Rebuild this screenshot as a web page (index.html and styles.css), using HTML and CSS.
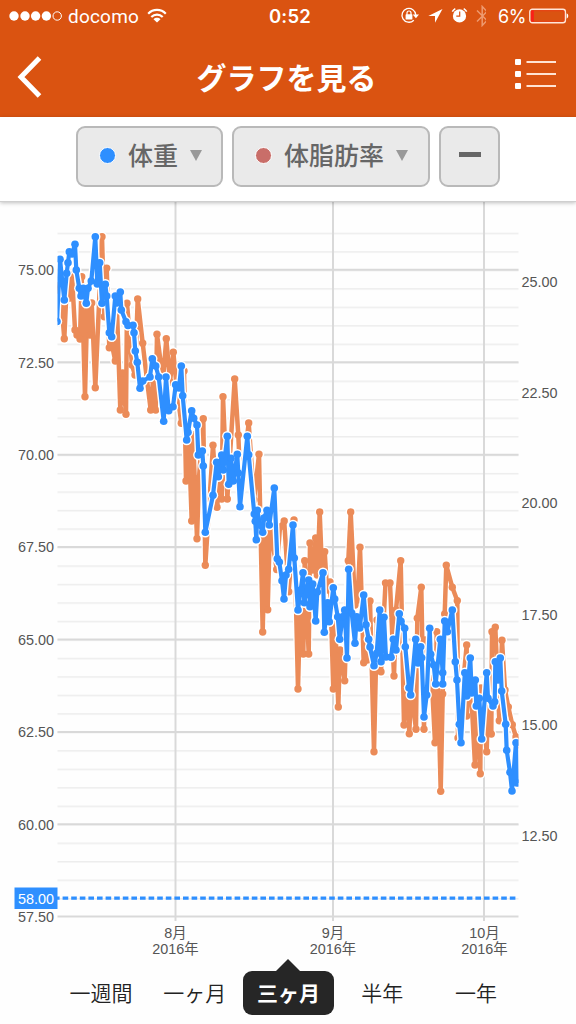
FILE: index.html
```html
<!DOCTYPE html>
<html lang="ja">
<head>
    <meta charset="utf-8">
    <meta name="viewport" content="width=device-width, initial-scale=1">
    <title>グラフを見る</title>
    <link rel="stylesheet" href="styles.css">
</head>
<body>
<header>
    <div class="status">
        <div class="carrier">
            <svg width="54" height="12" viewBox="0 0 54 12">
                <g fill="#fff"><circle cx="6" cy="6" r="4.7"/><circle cx="17" cy="6" r="4.7"/><circle cx="27.6" cy="6" r="4.7"/><circle cx="38.4" cy="6" r="4.7"/></g>
                <circle cx="49.2" cy="6" r="4.2" fill="none" stroke="#fff"/>
            </svg>
            <span class="name">docomo</span>
            <svg class="wifi" width="20" height="16" viewBox="0 0 20 16">
                <g fill="none" stroke="#fff" stroke-width="2.2"><path d="M1.2 5.7C6 .7 14 .7 18.8 5.7"/><path d="M4.3 9C7.5 5.8 12.5 5.8 15.7 9"/></g>
                <path d="M6.5 11.2C8.5 9.3 11.5 9.3 13.5 11.2L10 14.6z" fill="#fff"/>
            </svg>
        </div>
        <div class="clock">0:52</div>
        <div class="indicators">
            <svg width="86" height="22" viewBox="400 5 86 22">
                <!-- rotation lock -->
                <path d="M413.800 20.200A6.900 6.900 0 1 1 415.800 15" fill="none" stroke="#fff" stroke-width="1.300"/>
                <path d="M412.700 14.500h6.300l-3.100 3.800z" fill="#fff"/>
                <rect x="405.600" y="14.300" width="6.800" height="5.200" rx=".6" fill="#fff"/>
                <path d="M407 15v-2a2 2 0 0 1 4 0v2" fill="none" stroke="#fff" stroke-width="1.200"/>
                <!-- location -->
                <path d="M442.500 9L428.300 16h6.700v6.700z" fill="#fff"/>
                <!-- alarm -->
                <circle cx="459.500" cy="15.900" r="6.600" fill="#fff"/>
                <path d="M452.300 11.700a8 8 0 0 1 3-3M463.700 8.700a8 8 0 0 1 3 3" stroke="#fff" stroke-width="1.500" fill="none"/>
                <path d="M459.700 11.500v4.700h-3.400" fill="none" stroke="#da5311" stroke-width="1.200"/>
                <!-- bluetooth -->
                <path d="M477 10.500l10 10-4.800 5V6.500l4.800 5-10 10" fill="none" stroke="#ee9a70" stroke-width="1.500"/>
            </svg>
            <span class="percent">6%</span>
            <svg class="battery" width="40" height="16" viewBox="0 0 40 16">
                <rect x=".8" y="1.300" width="35.600" height="13.400" rx="2.500" fill="none" stroke="#ffe5d8" stroke-width="1.400"/>
                <rect x="2.300" y="2.800" width="32.600" height="10.400" rx="1" fill="none" stroke="#ef3a1a" stroke-width=".7"/>
                <rect x="2" y="2.500" width="2.800" height="11" fill="#fa2018"/>
                <path d="M37.600 5.300a3 3 0 0 1 0 5.400z" fill="#fff"/>
            </svg>
        </div>
    </div>
    <div class="navbar">
        <svg width="26" height="42" viewBox="0 0 26 42"><path d="M22.500 2L4 21l18.500 19" fill="none" stroke="#fff" stroke-width="5"/></svg>
        <h1>グラフを見る</h1>
        <svg width="42" height="32" viewBox="0 0 42 32">
            <g fill="#fff"><rect y="1" width="6" height="6" rx="1"/><rect y="13" width="6" height="6" rx="1"/><rect y="25" width="6" height="6" rx="1"/></g>
            <path d="M11.500 4h29.500M11.500 16h29.500M11.500 28h29.500" stroke="#ffe3d4" stroke-width="2"/>
        </svg>
    </div>
</header>

<div class="toolbar">
    <button class="weight"><i class="dot"></i><span>体重</span><i class="arrow"></i></button>
    <button class="fat"><i class="dot"></i><span>体脂肪率</span><i class="arrow"></i></button>
    <button class="line"><i class="dash"></i></button>
</div>

<svg class="chart" width="576" height="758" viewBox="0 202 576 758">
    <defs>
        <clipPath id="plot"><rect x="57.500" y="202" width="461" height="730"/></clipPath>
        <pattern id="minor" x="0" y="232.700" width="576" height="18.480" patternUnits="userSpaceOnUse">
            <rect y="0" width="576" height="1.500" fill="#ededed"/>
        </pattern>
        <marker id="dotFat" markerUnits="userSpaceOnUse" markerWidth="10" markerHeight="10" refX="5" refY="5"><circle cx="5" cy="5" r="3.700" fill="#eb8b58"/></marker>
        <marker id="dotWeight" markerUnits="userSpaceOnUse" markerWidth="10" markerHeight="10" refX="5" refY="5"><circle cx="5" cy="5" r="3.800" fill="#2e8fff"/></marker>
        <marker id="dotHalo" markerUnits="userSpaceOnUse" markerWidth="12" markerHeight="12" refX="6" refY="6"><circle cx="6" cy="6" r="5.200" fill="#fff"/></marker>
        <path id="fat" d="M57 290L60 285L64.300 338.700L67 280L70 298L72 275L75 330L77 335L80 339L81.700 276.700L85 396.700L87.300 303L90 335L91.700 303L95.300 387.700L102 236.700L104.300 316.700L106.700 268.300L109.300 347.700L112 345L115.300 361L117 310L120.300 410L122.700 373L126 414.300L127 303.300L132 365L135 375L137.700 299L142.700 343.300L147 380L150.700 410L153 380L155.700 410L157 334.300L163 380L166.300 338.700L170 382L173.300 352.300L177 390L181.300 423.300L184 371L186 481L189 443L191.700 521L193 435L197 538.700L199 478L203.300 418.700L205.300 565.300L213 445.300L217 507.300L220 480L221.700 499L223 396.700L227.300 499L234.700 379L238.300 435L240.700 490L248.700 423L254 500L259 454.300L262.700 632L265 530L267.700 609.700L270 525L276.700 569.500L280 527L284.200 521L288.700 591.700L294 520L298 689L300.500 590L303.300 654L304.700 560.700L308.700 654L310 543L313 570L315.700 538L317.300 575L319.700 512L322 570L324.700 551.700L327 590L330 582L333.300 689L335 615L338.300 707L340 650L344.700 680.700L348.300 560.700L350.700 512L355 605L357.500 600L360 547.300L363.700 662.700L367 660L370 601L374 751.700L377 620L381 671.700L385.500 583L390 583L394 676L396 610L400.700 560.700L404 725L406 660L409.300 733.700L411 690L416 729.300L417.300 618.300L421.300 587.300L424 729.300L425 640L430 645L435 742.700L436.700 631.700L440.700 791.300L442.700 694L444.700 614L446.300 565.300L452.300 587.300L457.300 600.700L458 738L466.700 645L466.700 716L470 670L475 765L477 690L480.300 773.700L481 688L486.700 751.700L488 700L491.300 734L492 631.700L495.300 627.300L499.300 720.700L502 640.300L505 690L508.300 707L512.300 724.700L516 737L520 745"/>
        <path id="weight" d="M57 321.500L60 259.300L64.300 300L66.700 273.300L68 262.700L69.300 251.700L72 254L75 244.300L76.300 270L79.300 288.300L81 296L83.300 288.300L86.300 303.300L88 288.300L91.300 281L95.300 236.700L97.300 284L99.700 262.700L102 303.300L105.300 284.300L106.700 296L109.300 332.700L111.700 336.700L115.300 296L117 303L120.300 292L121.300 310L126 321.700L128 325.500L133 325.300L134 332.700L135.300 351L137.300 362.300L140 388.300L142.700 381L150 377L152.300 358.700L155.700 366L158.700 377L163.700 421.300L166 377L168.700 410.700L173 406.700L175.700 384.800L179 388L181.300 366L182.700 395.700L186.700 440L188 432.300L191.700 410.700L193.700 418.300L197 425L198.300 455L202.300 451L203.300 466L205.300 532.300L213 495.300L216.700 462.300L218.300 476.700L221.700 455L223.300 470L227.300 436.300L228.700 484.300L231 458.300L233.300 481L237.300 454.300L238.300 473L240 506.700L247.300 436.300L248.700 454.700L254.300 514L255.300 521.300L256.300 539.700L257.300 510.300L260 525L262.700 532.300L264 518L267 510.300L269.300 525L274.300 488L277.300 558.700L279.300 562L282 580.700L284 599L286 575L288.700 569.300L293 525L294.300 558L298 610L300.700 590L303 572.700L304.300 602.700L308.700 580L310 606.700L312.700 584L315.700 621L317.300 592L323 572.700L324.300 632.300L327.700 602.700L329.300 621.700L333.300 587.700L334.700 599L337.700 616.700L339.700 639.300L342.700 616.700L344.700 610L347 658L348.700 569.300L351.700 613L355 643.300L356.700 616.700L359.700 628L363.700 595L366 624.700L368.700 639.300L370 647L374 665.700L376.700 653.300L379.700 610L381 661.700L384 617.300L386 657L391 657.300L393.300 639.300L396 650L399.300 613.700L401 621.300L404.700 628.300L405.300 646.700L409 687.700L410.700 695L415.700 639.300L418 663L420.700 646.700L421.700 657.700L424 717L426.700 695L429.700 628.300L430.700 654.300L433.700 665L435.700 684L440.300 639.300L442.700 672.700L442.700 684L444.700 621L447.300 631.700L452.300 610L455.300 661.700L457 680L459.300 724.300L461 742.700L464.800 672.700L466.700 696L470.300 658L471.700 693L475.300 680L476.300 706L479.300 698.300L481.700 739L486.700 672.700L488 698.300L493 706L494.700 701.700L495.300 661.700L498 680L500.300 658L501.700 691L505.700 724.300L506.700 750.300L510 772.300L512 791L516 742.700L517 783"/>
    </defs>

    <rect x="57.500" y="202" width="461" height="758" fill="#fefefe"/>
    <rect x="57.500" y="232" width="461" height="684" fill="url(#minor)"/>
    <g stroke="#d9d9d9" stroke-width="2">
        <path d="M57.500 269.700h461M57.500 362.200h461M57.500 454.700h461M57.500 547h461M57.500 639.500h461M57.500 732h461M57.500 824.300h461M57.500 916.500h461"/>
        <path d="M175.500 202v719M333 202v719M484 202v719"/>
    </g>
    <path d="M56 898.200h462" stroke="#2e8fff" stroke-width="3.300" stroke-dasharray="5.600 3" stroke-dashoffset="2"/>

    <g class="series" clip-path="url(#plot)">
        <use href="#fat" class="halo" marker-start="url(#dotHalo)" marker-mid="url(#dotHalo)" marker-end="url(#dotHalo)"/>
        <use href="#fat" class="fat" marker-start="url(#dotFat)" marker-mid="url(#dotFat)" marker-end="url(#dotFat)"/>
        <use href="#weight" class="halo" marker-start="url(#dotHalo)" marker-mid="url(#dotHalo)" marker-end="url(#dotHalo)"/>
        <use href="#weight" class="weight" marker-start="url(#dotWeight)" marker-mid="url(#dotWeight)" marker-end="url(#dotWeight)"/>
    </g>

    <g class="labels left">
        <text x="54" y="275">75.00</text>
        <text x="54" y="367.500">72.50</text>
        <text x="54" y="460">70.00</text>
        <text x="54" y="552.300">67.50</text>
        <text x="54" y="644.800">65.00</text>
        <text x="54" y="737.300">62.50</text>
        <text x="54" y="829.500">60.00</text>
        <text x="54" y="922">57.50</text>
        <rect x="14.500" y="887.500" width="43" height="21.500" fill="#2e8fff"/>
        <text x="54" y="904" class="goal">58.00</text>
    </g>
    <g class="labels">
        <text x="521.500" y="287">25.00</text>
        <text x="521.500" y="398">22.50</text>
        <text x="521.500" y="508">20.00</text>
        <text x="521.500" y="619.500">17.50</text>
        <text x="521.500" y="730">15.00</text>
        <text x="521.500" y="841">12.50</text>
    </g>
    <g class="labels months">
        <text x="175.500" y="938">8月</text><text x="175.500" y="954">2016年</text>
        <text x="333" y="938">9月</text><text x="333" y="954">2016年</text>
        <text x="484.500" y="938">10月</text><text x="484.500" y="954">2016年</text>
    </g>
</svg>

<nav>
    <a>一週間</a>
    <a>一ヶ月</a>
    <a class="active">三ヶ月</a>
    <a>半年</a>
    <a>一年</a>
</nav>
</body>
</html>
```

FILE: styles.css
```css
* {
    box-sizing: border-box;
}

body {
    margin: 0;
    height: 1024px;
    overflow: hidden;
    background: #fefefe;
    font-family: "Liberation Sans", "Noto Sans CJK JP", sans-serif;
}

svg {
    display: block;
    flex: none;
}

header {
    height: 117px;
    background: #da5311;
    color: #fff;
}

.status {
    display: grid;
    grid-template-columns: 1fr auto 1fr;
    align-items: center;
    height: 32px;
    padding: 0 7px 0 8px;
    font-family: Inter, sans-serif;
    font-size: 18px;
}

.carrier, .indicators {
    display: flex;
    align-items: center;
}

.carrier .name {
    margin-left: 6px;
    font-family: Roboto, sans-serif;
    font-size: 19px;
    letter-spacing: 0.2px;
}

.wifi {
    margin-left: 8px;
}

.clock {
    padding-left: 3px;
    font-size: 18.5px;
    font-weight: 600;
    letter-spacing: 0.2px;
}

.indicators {
    justify-content: flex-end;
}

.percent {
    margin-left: 12px;
    width: 31px;
    letter-spacing: -0.3px;
}

.navbar {
    display: flex;
    justify-content: space-between;
    align-items: center;
    height: 85px;
    padding: 6px 19px 2px 17px;
}

.navbar > svg:last-child {
    margin-bottom: 6px;
}

h1 {
    margin: 0 0 2px 15px;
    font-family: "Noto Sans CJK JP", sans-serif;
    font-size: 30px;
    font-weight: 700;
    line-height: 44px;
}

.toolbar {
    display: flex;
    justify-content: center;
    gap: 9px;
    position: relative;
    height: 85px;
    padding-top: 9px;
    background: #fff;
    border-bottom: 1px solid #cfcfcf;
    box-shadow: 0 1px 4px rgba(0, 0, 0, 0.25);
}

.toolbar button {
    display: flex;
    align-items: center;
    height: 61px;
    padding: 0 20px 3px 21px;
    border: 2px solid #b9b9b9;
    border-radius: 9px;
    background: #eaeaea;
    color: #666;
    font-family: "Noto Sans CJK JP", sans-serif;
    font-size: 25px;
    font-weight: 500;
}

.toolbar .weight {
    width: 147px;
}

.toolbar .fat {
    width: 198px;
}

.toolbar .line {
    width: 61px;
    padding: 0;
    justify-content: center;
}

.dot {
    width: 17px;
    height: 17px;
    margin-right: 12px;
    flex: none;
    border: 1.5px solid #fff;
    border-radius: 50%;
    background: #2e8fff;
}

.fat .dot {
    background: #c96e69;
}

.arrow {
    margin-left: 12px;
    border: 6.5px solid transparent;
    border-top: 11px solid #999;
    border-bottom: 0;
}

.toolbar span {
    white-space: nowrap;
    margin-top: -2px;
}

.dash {
    width: 22px;
    height: 5px;
    margin-bottom: 4px;
    background: #666;
}

.series use {
    fill: none;
    stroke-linejoin: round;
}

.series .halo {
    stroke: #fff;
    stroke-width: 7;
}

.series .fat {
    stroke: #eb8b58;
    stroke-width: 4.5;
}

.series .weight {
    stroke: #2e8fff;
    stroke-width: 4.2;
}

.labels text {
    font-size: 14.4px;
    fill: #555;
}

.labels.left text {
    text-anchor: end;
}

.labels .goal {
    fill: #fff;
}

.months text {
    font-size: 14.4px;
    text-anchor: middle;
}

nav {
    display: flex;
    align-items: center;
    height: 64px;
    padding: 0 53px 2px 54px;
    font-family: "Noto Sans CJK JP", sans-serif;
    font-size: 21px;
    font-weight: 350;
    color: #222;
}

nav a {
    flex: 1;
    height: 44px;
    margin: 4px 1.5px 0;
    line-height: 43px;
    text-align: center;
    white-space: nowrap;
}

nav .active {
    position: relative;
    border-radius: 9px;
    background: #262626;
    color: #fff;
    font-weight: 700;
}

/* pointer up to the chart */
nav .active::before {
    content: "";
    position: absolute;
    left: 50%;
    top: -12px;
    margin-left: -13px;
    border: 13px solid transparent;
    border-top: 0;
    border-bottom-color: #262626;
}
```
